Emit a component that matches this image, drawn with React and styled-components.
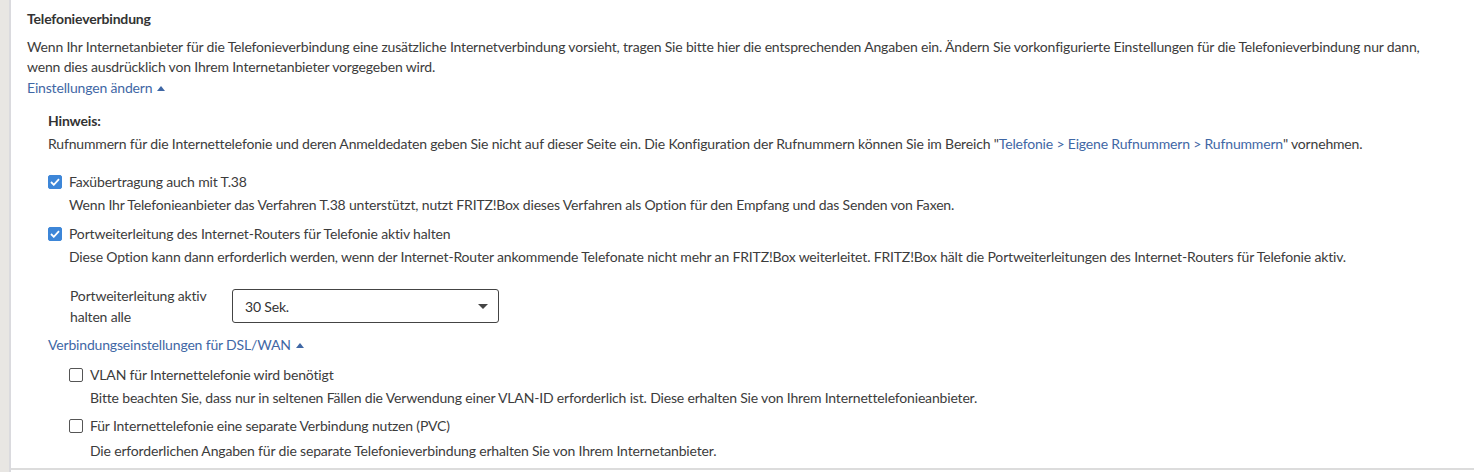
import React from "react";
import styled, { createGlobalStyle } from "styled-components";

const GlobalStyle = createGlobalStyle`
  body {
    margin: 0;
    background: #fff;
    font-family: Lato, "Liberation Sans", sans-serif;
    font-size: 14px;
    letter-spacing: -0.17px;
    color: #3c3c3c;
  }
`;

const Page = styled.div`
  display: flex;
  height: 472px;
`;

const Strip = styled.div`
  width: 9px;
  background: #e8e6e3;
  border-right: 2px solid #dadade;
`;

const Main = styled.div`
  flex: 1;
  height: 470px;
  border-bottom: 2px solid #dcdcdc;
  padding: 9px 30px 0 16px;
  box-sizing: border-box;
`;

const Title = styled.h3`
  margin: 0 0 8px;
  font-size: 14px;
  line-height: 20px;
  font-weight: 700;
  color: #333;
`;

const Text = styled.p`
  margin: ${({ $mt }) => $mt || 0}px 0 0;
  line-height: 20px;
`;

const Link = styled.a`
  display: inline-flex;
  align-items: center;
  gap: 5px;
  margin-top: ${({ $mt }) => $mt || 0}px;
  line-height: 20px;
  color: #3f67a5;
  text-decoration: none;
  cursor: pointer;
`;

const Caret = styled.span`
  width: 0;
  height: 0;
  border-left: 4px solid transparent;
  border-right: 4px solid transparent;
  border-bottom: 5px solid currentColor;
`;

const Indent = styled.div`
  padding-left: ${({ $pl }) => $pl}px;
  margin-top: ${({ $mt }) => $mt || 0}px;
`;

const Label = styled.div`
  font-weight: 700;
  line-height: 20px;
  color: #333;
`;

const InlineLink = styled.span`
  color: #3f67a5;
`;

const Option = styled.div`
  margin-top: ${({ $mt }) => $mt}px;
`;

const CheckRow = styled.label`
  display: flex;
  align-items: center;
  gap: 7px;
  line-height: 20px;
`;

const Box = styled.span`
  width: 14px;
  height: 14px;
  box-sizing: border-box;
  border-radius: 2px;
  display: inline-flex;
  align-items: center;
  justify-content: center;
  background: ${({ $checked }) => ($checked ? "#3d86d8" : "#fff")};
  border: 1px solid ${({ $checked }) => ($checked ? "#3d86d8" : "#555")};
`;

const Hint = styled.p`
  margin: ${({ $mt }) => $mt || 3}px 0 0 21px;
  line-height: 20px;
`;

const SelectRow = styled.div`
  display: flex;
  align-items: center;
  margin: 18px 0 0 22px;
`;

const SelectLabel = styled.div`
  width: 162px;
  line-height: 21px;
`;

const Select = styled.div`
  width: 267px;
  height: 34px;
  box-sizing: border-box;
  border: 1px solid #444;
  border-radius: 3px;
  display: flex;
  align-items: center;
  justify-content: space-between;
  padding: 0 10px 0 12px;
  color: #333;
`;

const Arrow = styled.span`
  width: 0;
  height: 0;
  border-left: 5px solid transparent;
  border-right: 5px solid transparent;
  border-top: 5px solid #444;
`;

const Check = ({ checked, children }) => (
  <CheckRow>
    <Box $checked={checked}>
      {checked && (
        <svg width="10" height="8" viewBox="0 0 10 8">
          <path d="M1 4l2.8 2.8L9 1.2" fill="none" stroke="#fff" strokeWidth="1.8" />
        </svg>
      )}
    </Box>
    {children}
  </CheckRow>
);

export default function App() {
  return (
    <>
      <GlobalStyle />
      <Page>
        <Strip />
        <Main>
          <Title>Telefonieverbindung</Title>
          <Text>
            Wenn Ihr Internetanbieter für die Telefonieverbindung eine zusätzliche Internetverbindung vorsieht, tragen Sie bitte hier die entsprechenden Angaben ein. Ändern Sie vorkonfigurierte Einstellungen für die Telefonieverbindung nur dann, wenn dies ausdrücklich von Ihrem Internetanbieter vorgegeben wird.
          </Text>
          <Link $mt={1}>
            Einstellungen ändern <Caret />
          </Link>
          <Indent $pl={21} $mt={13}>
            <Label>Hinweis:</Label>
            <Text $mt={3}>
              Rufnummern für die Internettelefonie und deren Anmeldedaten geben Sie nicht auf dieser Seite ein. Die Konfiguration der Rufnummern können Sie im Bereich "
              <InlineLink>Telefonie &gt; Eigene Rufnummern &gt; Rufnummern</InlineLink>" vornehmen.
            </Text>
            <Option $mt={18}>
              <Check checked>Faxübertragung auch mit T.38</Check>
              <Hint>Wenn Ihr Telefonieanbieter das Verfahren T.38 unterstützt, nutzt FRITZ!Box dieses Verfahren als Option für den Empfang und das Senden von Faxen.</Hint>
            </Option>
            <Option $mt={9}>
              <Check checked>Portweiterleitung des Internet-Routers für Telefonie aktiv halten</Check>
              <Hint>Diese Option kann dann erforderlich werden, wenn der Internet-Router ankommende Telefonate nicht mehr an FRITZ!Box weiterleitet. FRITZ!Box hält die Portweiterleitungen des Internet-Routers für Telefonie aktiv.</Hint>
              <SelectRow>
                <SelectLabel>Portweiterleitung aktiv halten alle</SelectLabel>
                <Select>
                  30 Sek.
                  <Arrow />
                </Select>
              </SelectRow>
            </Option>
            <Link $mt={8}>
              Verbindungseinstellungen für DSL/WAN <Caret />
            </Link>
            <Indent $pl={21}>
              <Option $mt={10}>
                <Check>VLAN für Internettelefonie wird benötigt</Check>
                <Hint>Bitte beachten Sie, dass nur in seltenen Fällen die Verwendung einer VLAN-ID erforderlich ist. Diese erhalten Sie von Ihrem Internettelefonieanbieter.</Hint>
              </Option>
              <Option $mt={8}>
                <Check>Für Internettelefonie eine separate Verbindung nutzen (PVC)</Check>
                <Hint $mt={5}>Die erforderlichen Angaben für die separate Telefonieverbindung erhalten Sie von Ihrem Internetanbieter.</Hint>
              </Option>
            </Indent>
          </Indent>
        </Main>
      </Page>
    </>
  );
}
